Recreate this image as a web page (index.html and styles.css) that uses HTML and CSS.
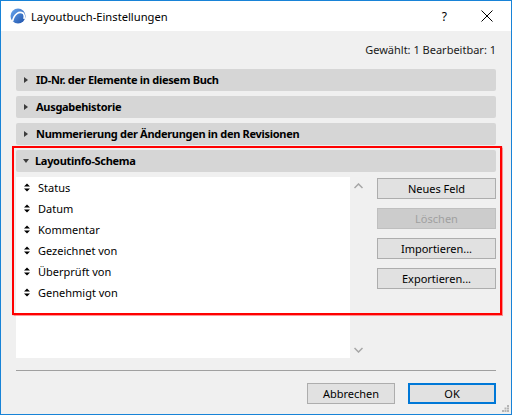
FILE: index.html
```html
<!DOCTYPE html>
<html>
<head>
<meta charset="utf-8">
<link rel="stylesheet" href="styles.css">
</head>
<body>
<div class="window">
  <div class="titlebar">
    <svg class="appicon" width="16" height="16" viewBox="0 0 16 16">
      <defs>
        <linearGradient id="g" x1="0" y1="0" x2="1" y2="1">
          <stop offset="0" stop-color="#6aa8f0"/>
          <stop offset="1" stop-color="#1c4fa8"/>
        </linearGradient>
      </defs>
      <circle cx="8" cy="8" r="7.5" fill="url(#g)"/>
      <path d="M2.5 13.5 C4 6 9 2.5 13.5 5.5 C14.5 7 14.5 9 14 11" fill="none" stroke="#fff" stroke-width="1.6"/>
    </svg>
    <span class="title">Layoutbuch-Einstellungen</span>
    <span class="help">?</span>
    <svg class="close" width="12" height="12" viewBox="0 0 12 12">
      <path d="M0.5 0.5 L11.5 11.5 M11.5 0.5 L0.5 11.5" stroke="#000" stroke-width="1"/>
    </svg>
  </div>
  <div class="content">
    <div class="info">Gewählt: 1 Bearbeitbar: 1</div>
    <div class="section-head"><span class="tri-right"></span>ID-Nr. der Elemente in diesem Buch</div>
    <div class="section-head"><span class="tri-right"></span>Ausgabehistorie</div>
    <div class="section-head"><span class="tri-right"></span>Nummerierung der Änderungen in den Revisionen</div>
    <div class="section-head"><span class="tri-down"></span>Layoutinfo-Schema</div>
    <div class="section-body">
      <div class="listbox">
        <ul class="list">
          <li><svg class="ud" width="6" height="9" viewBox="0 0 6 9"><path d="M0 3.5 L3 0.5 L6 3.5 Z M0 5.5 L3 8.5 L6 5.5 Z" fill="#000"/></svg>Status</li>
          <li><svg class="ud" width="6" height="9" viewBox="0 0 6 9"><path d="M0 3.5 L3 0.5 L6 3.5 Z M0 5.5 L3 8.5 L6 5.5 Z" fill="#000"/></svg>Datum</li>
          <li><svg class="ud" width="6" height="9" viewBox="0 0 6 9"><path d="M0 3.5 L3 0.5 L6 3.5 Z M0 5.5 L3 8.5 L6 5.5 Z" fill="#000"/></svg>Kommentar</li>
          <li><svg class="ud" width="6" height="9" viewBox="0 0 6 9"><path d="M0 3.5 L3 0.5 L6 3.5 Z M0 5.5 L3 8.5 L6 5.5 Z" fill="#000"/></svg>Gezeichnet von</li>
          <li><svg class="ud" width="6" height="9" viewBox="0 0 6 9"><path d="M0 3.5 L3 0.5 L6 3.5 Z M0 5.5 L3 8.5 L6 5.5 Z" fill="#000"/></svg>Überprüft von</li>
          <li><svg class="ud" width="6" height="9" viewBox="0 0 6 9"><path d="M0 3.5 L3 0.5 L6 3.5 Z M0 5.5 L3 8.5 L6 5.5 Z" fill="#000"/></svg>Genehmigt von</li>
        </ul>
        <div class="scrollbar">
          <svg width="9" height="6" viewBox="0 0 9 6"><path d="M0.5 5 L4.5 1 L8.5 5" fill="none" stroke="#a6a6a6" stroke-width="1.5"/></svg>
          <svg width="9" height="6" viewBox="0 0 9 6"><path d="M0.5 1 L4.5 5 L8.5 1" fill="none" stroke="#a6a6a6" stroke-width="1.5"/></svg>
        </div>
      </div>
      <div class="buttons">
        <div class="btn">Neues Feld</div>
        <div class="btn disabled">Löschen</div>
        <div class="btn">Importieren...</div>
        <div class="btn">Exportieren...</div>
      </div>
    </div>
    <div class="separator"></div>
    <div class="footer">
      <div class="btn footbtn">Abbrechen</div>
      <div class="btn footbtn default">OK</div>
    </div>
  </div>
  <div class="highlight"></div>
  <svg class="grip" width="7" height="7" viewBox="0 0 7 7">
    <rect x="5" y="0" width="2" height="2" fill="#b4b4b4"/>
    <rect x="2.5" y="2.5" width="2" height="2" fill="#b4b4b4"/>
    <rect x="5" y="2.5" width="2" height="2" fill="#b4b4b4"/>
    <rect x="0" y="5" width="2" height="2" fill="#b4b4b4"/>
    <rect x="2.5" y="5" width="2" height="2" fill="#b4b4b4"/>
    <rect x="5" y="5" width="2" height="2" fill="#b4b4b4"/>
  </svg>
</div>
</body>
</html>
```
FILE: styles.css
```css
html, body {
  margin: 0;
  padding: 0;
  background: #ffffff;
}
body {
  width: 512px;
  height: 416px;
  font-family: "Noto Sans", "Open Sans", sans-serif;
  font-size: 11px;
  color: #000;
}
.window {
  position: relative;
  box-sizing: border-box;
  width: 512px;
  height: 415px;
  border: 1px solid #1883d7;
  background: #f0f0f0;
}
.titlebar {
  height: 30px;
  background: #fff;
  display: flex;
  align-items: center;
}
.appicon {
  margin-left: 9px;
  margin-right: 5px;
}
.title {
  font-size: 11.2px;
  flex: 1;
}
.help {
  font-size: 12px;
  color: #000;
  margin-right: 34px;
}
.close {
  margin-right: 18px;
}
.content {
  padding: 9px 15px 0 15px;
}
.info {
  height: 20px;
  line-height: 20px;
  text-align: right;
  color: #1a1a1a;
  margin-bottom: 9px;
}
.section-head {
  height: 22px;
  line-height: 22px;
  background: #d6d6d6;
  border-radius: 2px;
  font-weight: bold;
  letter-spacing: -0.3px;
  display: flex;
  align-items: center;
  margin-bottom: 5px;
}
.tri-right {
  width: 0;
  height: 0;
  border-top: 3.5px solid transparent;
  border-bottom: 3.5px solid transparent;
  border-left: 4px solid #3c3c3c;
  margin-left: 8px;
  margin-right: 8px;
}
.tri-down {
  width: 0;
  height: 0;
  border-left: 3.5px solid transparent;
  border-right: 3.5px solid transparent;
  border-top: 4px solid #3c3c3c;
  margin-left: 7px;
  margin-right: 6px;
}
.section-body {
  display: flex;
  gap: 10px;
}
.listbox {
  width: 351px;
  height: 181px;
  display: flex;
}
.list {
  list-style: none;
  margin: 0;
  padding: 0;
  width: 334px;
  background: #fff;
}
.list li {
  height: 21px;
  display: flex;
  align-items: center;
}
.ud {
  margin-left: 8px;
  margin-right: 8px;
}
.scrollbar {
  width: 17px;
  display: flex;
  flex-direction: column;
  justify-content: space-between;
  align-items: center;
  padding: 6px 0 5px 0;
  box-sizing: border-box;
}
.buttons {
  width: 119px;
  display: flex;
  flex-direction: column;
  gap: 9px;
  padding-top: 1px;
}
.btn {
  box-sizing: border-box;
  height: 21px;
  line-height: 19px;
  background: #e1e1e1;
  border: 1px solid #adadad;
  text-align: center;
}
.btn.disabled {
  background: #cccccc;
  border-color: #bfbfbf;
  color: #a0a0a0;
}
.separator {
  height: 1px;
  background: #a0a0a0;
  margin-top: 12px;
}
.footer {
  display: flex;
  justify-content: flex-end;
  gap: 13px;
  margin-top: 12px;
}
.footbtn {
  width: 88px;
}
.footbtn.default {
  border: 2px solid #0078d7;
  line-height: 17px;
}
.highlight {
  position: absolute;
  left: 11px;
  top: 145px;
  width: 486px;
  height: 165px;
  border: 2px solid #ff0000;
  box-shadow: 0 0 1px 0.5px rgba(255, 80, 80, 0.6);
  pointer-events: none;
}
.grip {
  position: absolute;
  right: 2px;
  bottom: 2px;
}
```
